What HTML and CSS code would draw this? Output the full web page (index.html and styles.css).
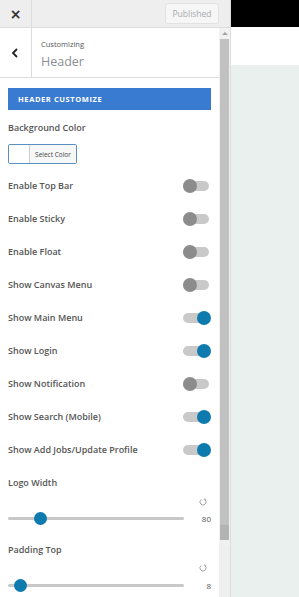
FILE: index.html
```html
<!DOCTYPE html>
<html lang="en">
<head>
    <meta charset="UTF-8">
    <meta name="viewport" content="width=device-width, initial-scale=1.0">
    <title>Customizing Header</title>
    <link rel="stylesheet" href="styles.css">
</head>
<body>
    <div class="app">
        <aside class="sidebar">
            <div class="topbar">
                <button class="close-btn">&times;</button>
                <div class="topbar-space">
                    <button class="publish-btn">Published</button>
                </div>
            </div>
            <div class="sidebar-body">
                <div class="panel">
                    <div class="section-title">
                        <button class="back-btn">
                            <svg width="8" height="10" viewBox="0 0 8 10"><path d="M6 1 L2 5 L6 9" fill="none" stroke="#222" stroke-width="1.8"/></svg>
                        </button>
                        <div class="title-text">
                            <span class="crumb">Customizing</span>
                            <span class="title">Header</span>
                        </div>
                    </div>

                    <div class="controls">
                        <div class="section-btn">Header Customize</div>

                        <label class="field-label first">Background Color</label>
                        <div class="color-picker">
                            <span class="swatch"></span>
                            <span class="color-text">Select Color</span>
                        </div>

                        <div class="toggle-row"><span>Enable Top Bar</span><span class="toggle"></span></div>
                        <div class="toggle-row"><span>Enable Sticky</span><span class="toggle"></span></div>
                        <div class="toggle-row"><span>Enable Float</span><span class="toggle"></span></div>
                        <div class="toggle-row"><span>Show Canvas Menu</span><span class="toggle"></span></div>
                        <div class="toggle-row"><span>Show Main Menu</span><span class="toggle on"></span></div>
                        <div class="toggle-row"><span>Show Login</span><span class="toggle on"></span></div>
                        <div class="toggle-row"><span>Show Notification</span><span class="toggle"></span></div>
                        <div class="toggle-row"><span>Show Search (Mobile)</span><span class="toggle on"></span></div>
                        <div class="toggle-row"><span>Show Add Jobs/Update Profile</span><span class="toggle on"></span></div>

                        <div class="range-field">
                            <label class="field-label">Logo Width</label>
                            <div class="reset-line">
                                <svg width="8" height="8" viewBox="0 0 8 8"><path d="M2.2 1.6 A3 3 0 1 0 5.8 1.6" fill="none" stroke="#999" stroke-width="0.9"/><path d="M5.8 0.4 L5.8 1.9 L7.2 1.9" fill="none" stroke="#999" stroke-width="0.9"/></svg>
                            </div>
                            <div class="slider-row">
                                <div class="track"><span class="thumb" style="left: 32px"></span></div>
                                <span class="value">80</span>
                            </div>
                        </div>

                        <div class="range-field second">
                            <label class="field-label">Padding Top</label>
                            <div class="reset-line">
                                <svg width="8" height="8" viewBox="0 0 8 8"><path d="M2.2 1.6 A3 3 0 1 0 5.8 1.6" fill="none" stroke="#999" stroke-width="0.9"/><path d="M5.8 0.4 L5.8 1.9 L7.2 1.9" fill="none" stroke="#999" stroke-width="0.9"/></svg>
                            </div>
                            <div class="slider-row">
                                <div class="track"><span class="thumb" style="left: 12px"></span></div>
                                <span class="value">8</span>
                            </div>
                        </div>
                    </div>
                </div>
                <div class="scrollbar">
                    <div class="scroll-arrow"></div>
                    <div class="scroll-thumb"></div>
                    <div class="scroll-rest"></div>
                </div>
            </div>
        </aside>
        <main class="preview">
            <div class="preview-top"></div>
            <div class="preview-white"></div>
            <div class="preview-page"></div>
        </main>
    </div>
</body>
</html>
```

FILE: styles.css
```css
* {
    box-sizing: border-box;
}
body {
    margin: 0;
    font-family: "Open Sans", "Noto Sans", sans-serif;
    background-color: #fff;
    overflow: hidden;
}
.app {
    display: flex;
    width: 299px;
    height: 597px;
}
.sidebar {
    width: 231px;
    height: 597px;
    display: flex;
    flex-direction: column;
    border-right: 1px solid #dcdcdc;
    background: #fff;
}
.topbar {
    height: 28px;
    display: flex;
    background: #eeeeee;
    border-bottom: 1px solid #dddddd;
}
.close-btn {
    width: 32px;
    height: 27px;
    border: none;
    border-right: 1px solid #dcdcdc;
    background: transparent;
    font-family: "DejaVu Sans", sans-serif;
    font-size: 14px;
    font-weight: 700;
    line-height: 1;
    color: #333;
    padding: 0;
}
.topbar-space {
    flex: 1;
    display: flex;
    justify-content: flex-end;
    align-items: center;
    padding-right: 11px;
}
.publish-btn {
    width: 54px;
    height: 21px;
    border: 1px solid #e2e2e2;
    border-radius: 3px;
    background: #f6f6f6;
    color: #a7aaad;
    font-family: "Open Sans", sans-serif;
    font-size: 8.5px;
    padding: 0;
}
.sidebar-body {
    flex: 1;
    display: flex;
    min-height: 0;
}
.panel {
    width: 219px;
}
.section-title {
    height: 50px;
    display: flex;
    border-bottom: 1px solid #dddddd;
}
.back-btn {
    width: 32px;
    border: none;
    border-right: 1px solid #dcdcdc;
    background: transparent;
    display: flex;
    align-items: center;
    justify-content: center;
    padding: 0 1px 0 0;
}
.title-text {
    display: flex;
    flex-direction: column;
    padding: 11px 0 0 9px;
}
.crumb {
    font-size: 7.5px;
    color: #555;
    line-height: 11px;
}
.title {
    font-size: 12.5px;
    color: #8c8f94;
    line-height: 18px;
    margin-top: 3px;
}
.controls {
    padding: 10px 8px 0 8px;
    display: flex;
    flex-direction: column;
}
.section-btn {
    height: 22px;
    background: #3a7bd2;
    color: #fff;
    font-weight: 700;
    font-size: 7.5px;
    letter-spacing: 0.6px;
    text-transform: uppercase;
    display: flex;
    align-items: center;
    padding-left: 10px;
}
.field-label {
    display: block;
    font-size: 9px;
    font-weight: 600;
    color: #555;
    line-height: 14px;
}
.field-label.first {
    margin-top: 11px;
}
.color-picker {
    margin-top: 9px;
    width: 69px;
    height: 20px;
    display: flex;
    border: 1px solid #5b8fc0;
    border-radius: 2px;
    overflow: hidden;
}
.swatch {
    width: 21px;
    background: #fff;
    border-right: 1px solid #ccc;
}
.color-text {
    flex: 1;
    background: #f6f7f7;
    font-size: 6.5px;
    color: #444;
    display: flex;
    align-items: center;
    justify-content: center;
}
.toggle-row {
    height: 33px;
    display: flex;
    align-items: center;
    justify-content: space-between;
    font-size: 9px;
    font-weight: 600;
    color: #555;
}
.color-picker + .toggle-row {
    margin-top: 5px;
}
.toggle {
    position: relative;
    width: 28px;
    height: 10px;
}
.toggle::before {
    content: "";
    position: absolute;
    left: 0;
    top: 0;
    width: 26px;
    height: 10px;
    border-radius: 5px;
    background: #c9c9c9;
}
.toggle::after {
    content: "";
    position: absolute;
    left: 0;
    top: -2px;
    width: 14px;
    height: 14px;
    border-radius: 50%;
    background: #8c8c8c;
}
.toggle.on::after {
    left: 14px;
    background: #0f7aad;
}
.range-field {
    margin-top: 10px;
}
.range-field.second {
    margin-top: 18px;
}
.reset-line {
    display: flex;
    justify-content: flex-end;
    padding-right: 4px;
    height: 8px;
    margin-top: 8px;
}
.reset-line svg {
    display: block;
}
.range-field.second .reset-line {
    margin-top: 7px;
}
.slider-row {
    display: flex;
    align-items: center;
    height: 14px;
    margin-top: 5px;
}
.range-field.second .slider-row {
    margin-top: 6px;
}
.track {
    position: relative;
    width: 176px;
    height: 3px;
    border-radius: 2px;
    background: #c8c8c8;
}
.thumb {
    position: absolute;
    top: -5px;
    width: 13px;
    height: 13px;
    margin-left: -6px;
    border-radius: 50%;
    background: #0f7aad;
}
.value {
    flex: 1;
    text-align: right;
    font-size: 8px;
    color: #555;
}
.scrollbar {
    width: 11px;
    display: flex;
    flex-direction: column;
    background: #f1f1f1;
}
.scroll-arrow {
    height: 11px;
    display: flex;
    align-items: center;
    justify-content: center;
}
.scroll-arrow::before {
    content: "";
    border-left: 3px solid transparent;
    border-right: 3px solid transparent;
    border-bottom: 3px solid #a3a3a3;
}
.scroll-thumb {
    margin: 0 1px;
    height: 501px;
    background: linear-gradient(#c1c1c1 0, #c1c1c1 97%, #b3b3b3 97%);
}
.scroll-rest {
    flex: 1;
    margin-top: 5px;
    background: #efefef;
}
.preview {
    flex: 1;
    display: flex;
    flex-direction: column;
}
.preview-top {
    height: 27px;
    background: #000;
}
.preview-white {
    height: 38px;
    background: #fff;
}
.preview-page {
    flex: 1;
    background: #eaf0ee;
}
```
